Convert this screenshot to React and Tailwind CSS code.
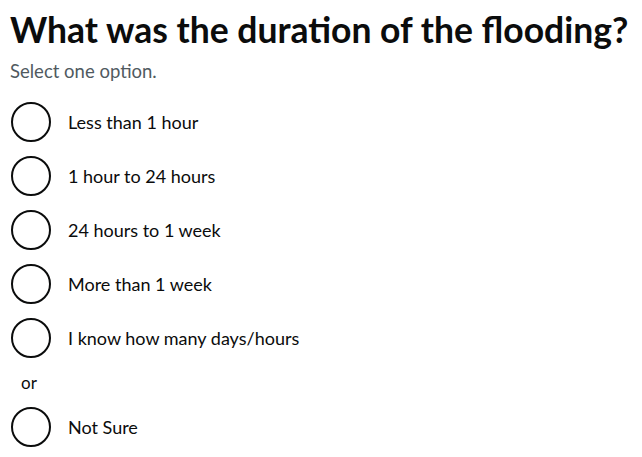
const OPTIONS = [
  'Less than 1 hour',
  '1 hour to 24 hours',
  '24 hours to 1 week',
  'More than 1 week',
  'I know how many days/hours',
]

function Radio({ label }) {
  return (
    <label className="flex items-center h-10">
      <span className="w-10 h-10 rounded-full border-2 border-[#0b0c0c] bg-white shrink-0" />
      <span className="pl-[17px] text-[18px] leading-[25px] text-[#0b0c0c]">{label}</span>
    </label>
  )
}

export default function App() {
  return (
    <div className="bg-white min-h-[457px] pl-[11px] pt-[8px] font-['Lato',sans-serif]">
      <h1 className="text-[35.5px] leading-[44px] font-bold text-[#0b0c0c] -ml-[1px] whitespace-nowrap">
        What was the duration of the flooding?
      </h1>
      <p className="mt-[7px] text-[18.5px] leading-[25px] text-[#505a5f] -ml-[1px]">Select one option.</p>
      <div className="mt-[18px] flex flex-col gap-[14px]">
        {OPTIONS.map(o => <Radio key={o} label={o} />)}
      </div>
      <div className="pl-[10px] mt-[12px] text-[17px] leading-[25px] text-[#0b0c0c]">or</div>
      <div className="mt-[12px]">
        <Radio label="Not Sure" />
      </div>
    </div>
  )
}
